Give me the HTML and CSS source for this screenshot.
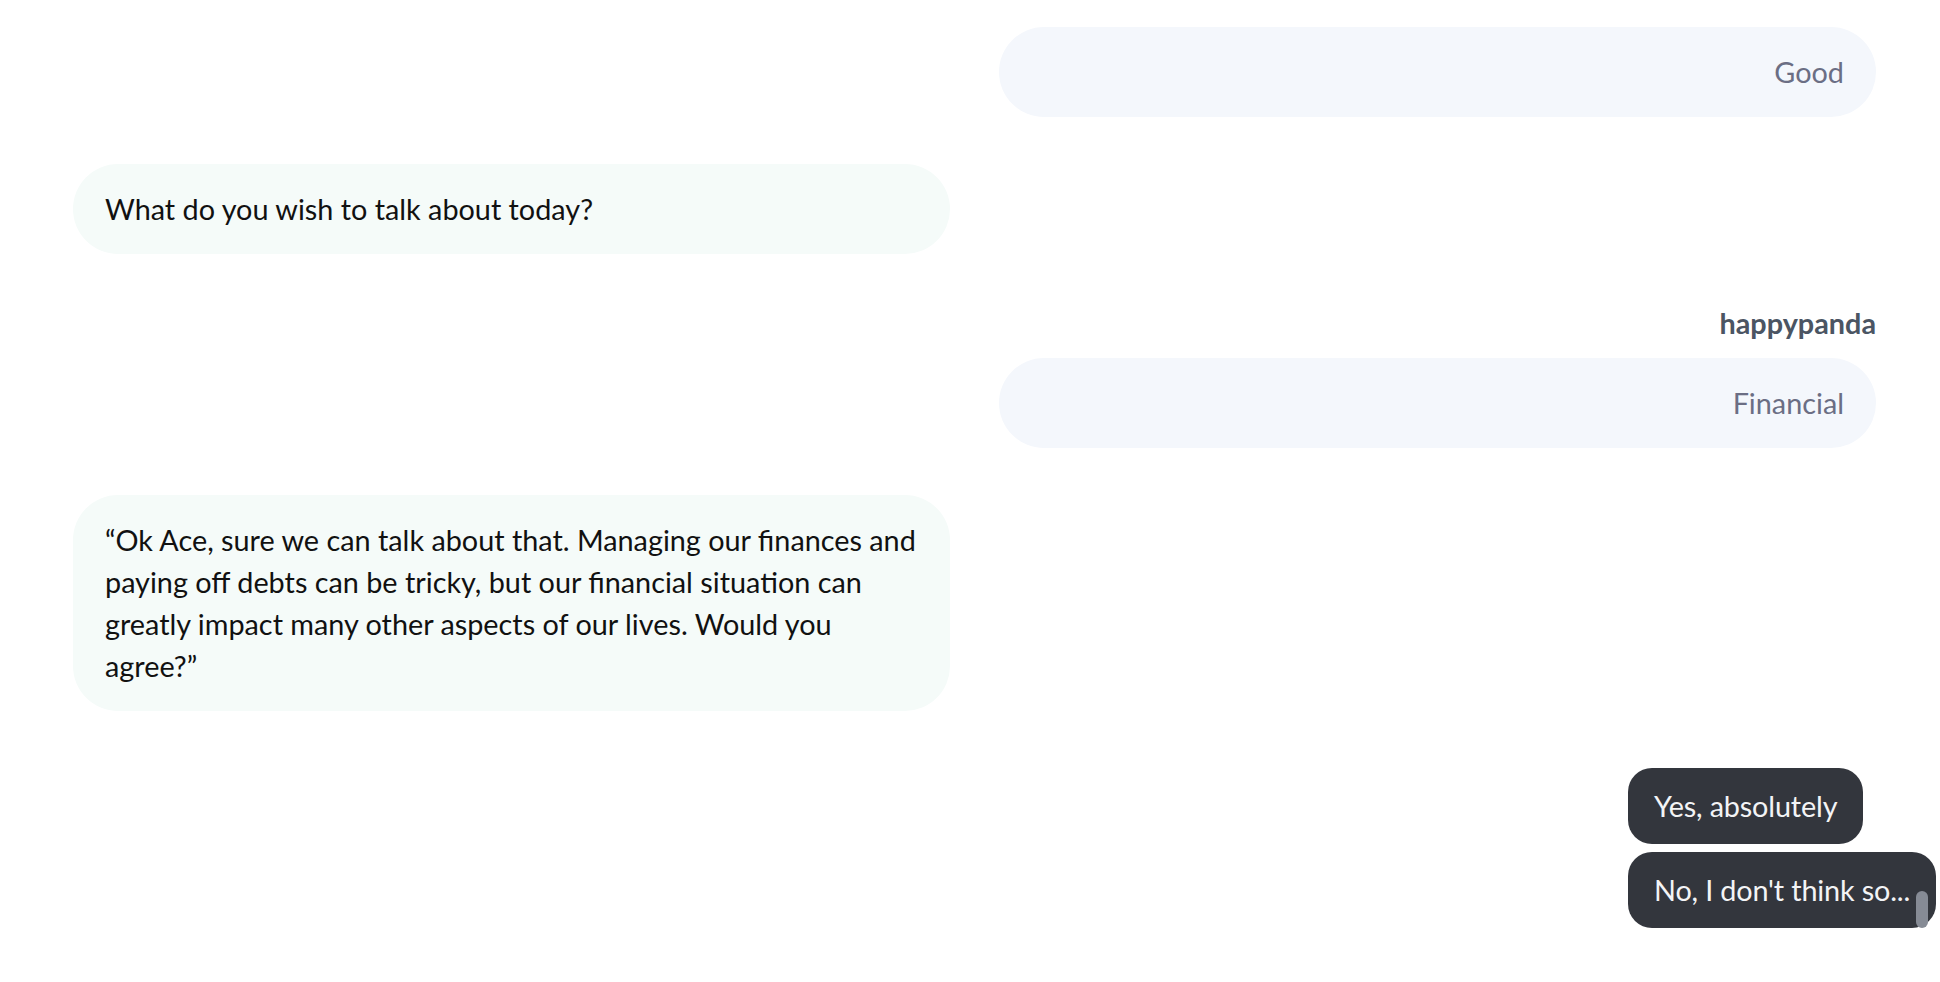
FILE: index.html
```html
<!DOCTYPE html>
<html lang="en">
<head>
<meta charset="utf-8">
<title>Chat</title>
<link rel="stylesheet" href="styles.css">
</head>
<body>
<div class="chat">
  <div class="row row-right">
    <div class="bubble bubble-user">Good</div>
  </div>
  <div class="row row-left">
    <div class="bubble bubble-bot">What do you wish to talk about today?</div>
  </div>
  <div class="row row-right">
    <div class="msg-user">
      <div class="author">happypanda</div>
      <div class="bubble bubble-user">Financial</div>
    </div>
  </div>
  <div class="row row-left">
    <div class="bubble bubble-bot">“Ok Ace, sure we can talk about that. Managing our finances and paying off debts can be tricky, but our financial situation can greatly impact many other aspects of our lives. Would you agree?”</div>
  </div>
  <div class="choices">
    <button class="choice">Yes, absolutely</button>
    <button class="choice">No, I don't think so...</button>
  </div>
  <div class="scroll-thumb"></div>
</div>
</body>
</html>
```

FILE: styles.css
```css
html, body {
  margin: 0;
  padding: 0;
  background: #ffffff;
  overflow: hidden;
}

body {
  font-family: "Lato", "Noto Sans", sans-serif;
  font-size: 28.8px;
  color: #111111;
}

.chat {
  position: relative;
  height: 982px;
  padding: 27px 64px 0 73px;
  box-sizing: border-box;
}

.row {
  display: flex;
  margin-bottom: 47px;
}

.row-right {
  justify-content: flex-end;
}

.row-left {
  justify-content: flex-start;
}

.bubble {
  width: 877px;
  box-sizing: border-box;
  padding: 24px 32px;
  line-height: 42px;
  border-radius: 45px;
}

.bubble-user {
  background: #f4f7fc;
  color: #6b6e84;
  text-align: right;
}

.bubble-bot {
  background: #f5fbf9;
  color: #111111;
}

.msg-user {
  display: flex;
  flex-direction: column;
  align-items: flex-end;
}

.author {
  font-weight: 700;
  color: #4b5563;
  line-height: 32px;
  margin: 6px 0 19px;
}

.choices {
  display: flex;
  flex-direction: column;
  align-items: flex-start;
  gap: 8px;
  width: 248px;
  margin-left: auto;
  margin-top: 57px;
}

.choice {
  font-family: inherit;
  font-size: 28.8px;
  line-height: 32px;
  letter-spacing: -0.15px;
  white-space: nowrap;
  background: #33363d;
  color: #f3f4f6;
  border: none;
  border-radius: 24px;
  padding: 22px 26px;
}

.scroll-thumb {
  position: absolute;
  right: 12px;
  top: 891px;
  width: 12px;
  height: 37px;
  border-radius: 6px;
  background: #868b95;
}
```
